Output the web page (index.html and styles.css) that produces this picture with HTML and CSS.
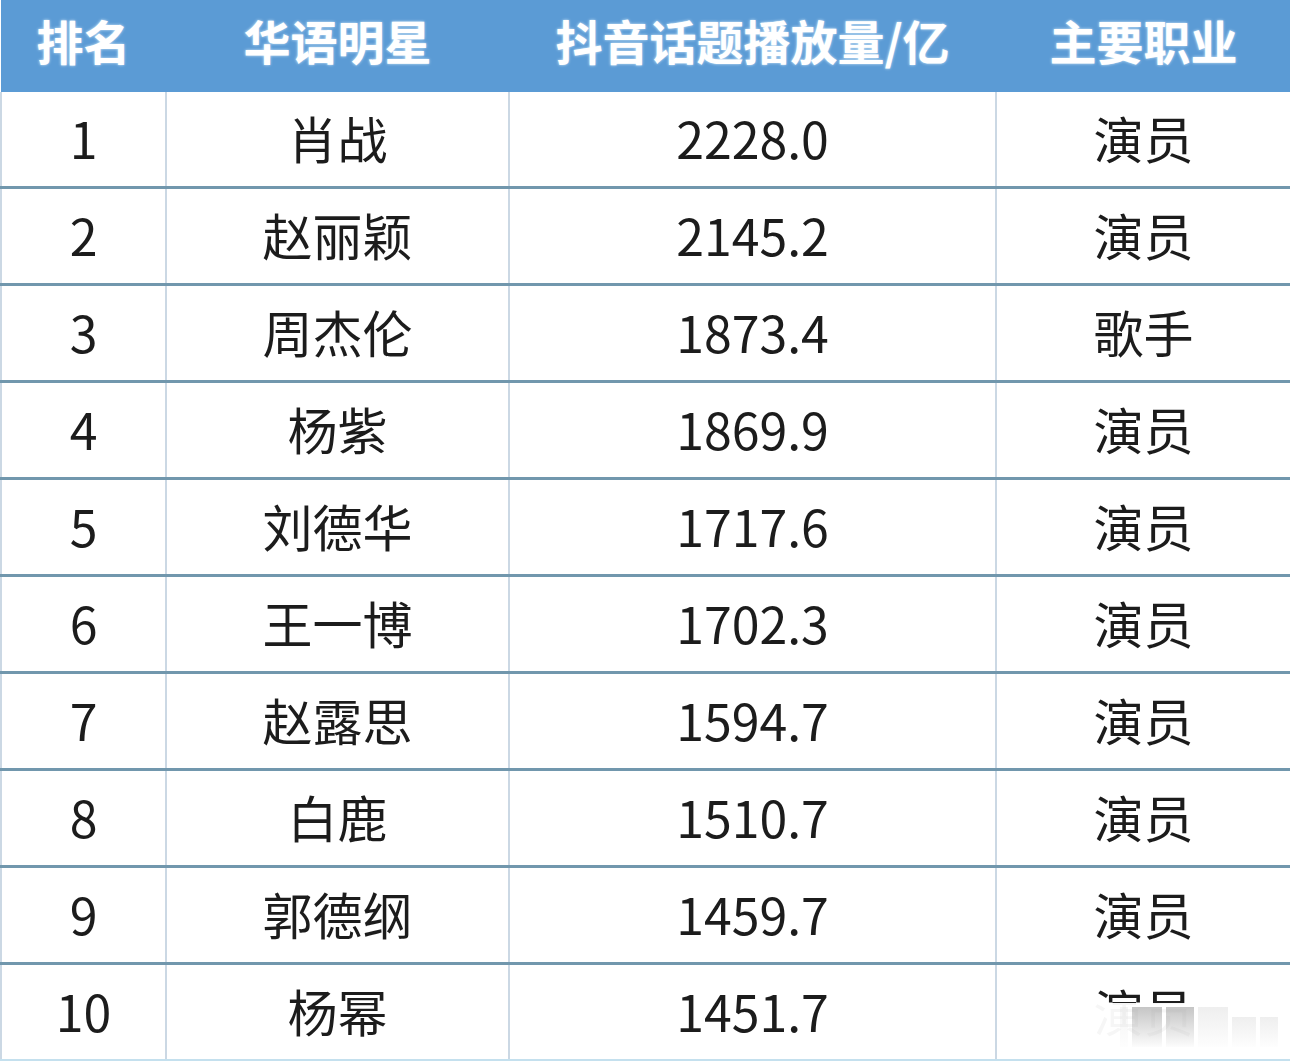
FILE: index.html
```html
<!DOCTYPE html>
<html lang="zh">
<head>
<meta charset="utf-8">
<link rel="stylesheet" href="styles.css">
</head>
<body>
<div class="wrap">
<table class="rank">
<colgroup>
<col class="c1"><col class="c2"><col class="c3"><col class="c4">
</colgroup>
<thead>
<tr><th>排名</th><th>华语明星</th><th>抖音话题播放量/亿</th><th>主要职业</th></tr>
</thead>
<tbody>
<tr><td>1</td><td>肖战</td><td>2228.0</td><td>演员</td></tr>
<tr><td>2</td><td>赵丽颖</td><td>2145.2</td><td>演员</td></tr>
<tr><td>3</td><td>周杰伦</td><td>1873.4</td><td>歌手</td></tr>
<tr><td>4</td><td>杨紫</td><td>1869.9</td><td>演员</td></tr>
<tr><td>5</td><td>刘德华</td><td>1717.6</td><td>演员</td></tr>
<tr><td>6</td><td>王一博</td><td>1702.3</td><td>演员</td></tr>
<tr><td>7</td><td>赵露思</td><td>1594.7</td><td>演员</td></tr>
<tr><td>8</td><td>白鹿</td><td>1510.7</td><td>演员</td></tr>
<tr><td>9</td><td>郭德纲</td><td>1459.7</td><td>演员</td></tr>
<tr><td>10</td><td>杨幂</td><td>1451.7</td><td>演员</td></tr>
</tbody>
</table>
<div class="watermark"><span class="b b1"></span><span class="b b2"></span><span class="b b3"></span><span class="b b4"></span><span class="b b5"></span><span class="b b6"></span></div>
</div>
</body>
</html>
```

FILE: styles.css
```css
html, body {
  margin: 0;
  padding: 0;
  background: #ffffff;
}
.wrap {
  position: relative;
  width: 1290px;
  height: 1061px;
  overflow: hidden;
}
.rank {
  width: 1290px;
  border-collapse: collapse;
  table-layout: fixed;
  font-family: "Noto Sans CJK SC", "Noto Sans", sans-serif;
}
.c1 { width: 165px; }
.c2 { width: 343px; }
.c3 { width: 487px; }
.c4 { width: 295px; }
.rank th {
  height: 78px;
  padding: 0 0 14px 0;
  background: #5b9bd5;
  color: #ffffff;
  font-size: 47px;
  font-weight: 700;
  text-align: center;
  vertical-align: middle;
  line-height: 1;
  text-shadow: 0 0 3px rgba(230, 245, 255, 0.9);
}
.rank td {
  height: 90px;
  padding: 0 0 4px 0;
  text-align: center;
  vertical-align: middle;
  font-size: 50px;
  line-height: 1;
  color: #1c1c1c;
  border-left: 2px solid #cbd8e4;
  border-right: 2px solid #cbd8e4;
  border-bottom: 3px solid #7197ad;
}
.rank tbody tr:last-child td {
  border-bottom: 3px solid #c4e0ee;
}
.watermark {
  position: absolute;
  left: 1050px;
  top: 1003px;
  width: 235px;
  height: 50px;
  background: rgba(255,255,255,0.96);
  display: flex;
  align-items: flex-end;
  gap: 4px;
  padding-left: 70px;
  box-sizing: border-box;
  padding-bottom: 6px;
}
.b {
  display: block;
  height: 40px;
  background: linear-gradient(to bottom, rgba(150,150,150,0.55), rgba(240,240,240,0.2));
}
.b1 { width: 8px; background: linear-gradient(to bottom, rgba(200,200,200,0.2), rgba(240,240,240,0.1)); }
.b2 { width: 30px; }
.b3 { width: 28px; }
.b4 { width: 30px; background: linear-gradient(to bottom, rgba(200,200,200,0.3), rgba(240,240,240,0.1)); }
.b5 { width: 24px; background: linear-gradient(to bottom, rgba(200,200,200,0.3), rgba(240,240,240,0.1)); height: 30px; }
.b6 { width: 18px; background: linear-gradient(to bottom, rgba(200,200,200,0.3), rgba(240,240,240,0.1)); height: 30px; }
```
